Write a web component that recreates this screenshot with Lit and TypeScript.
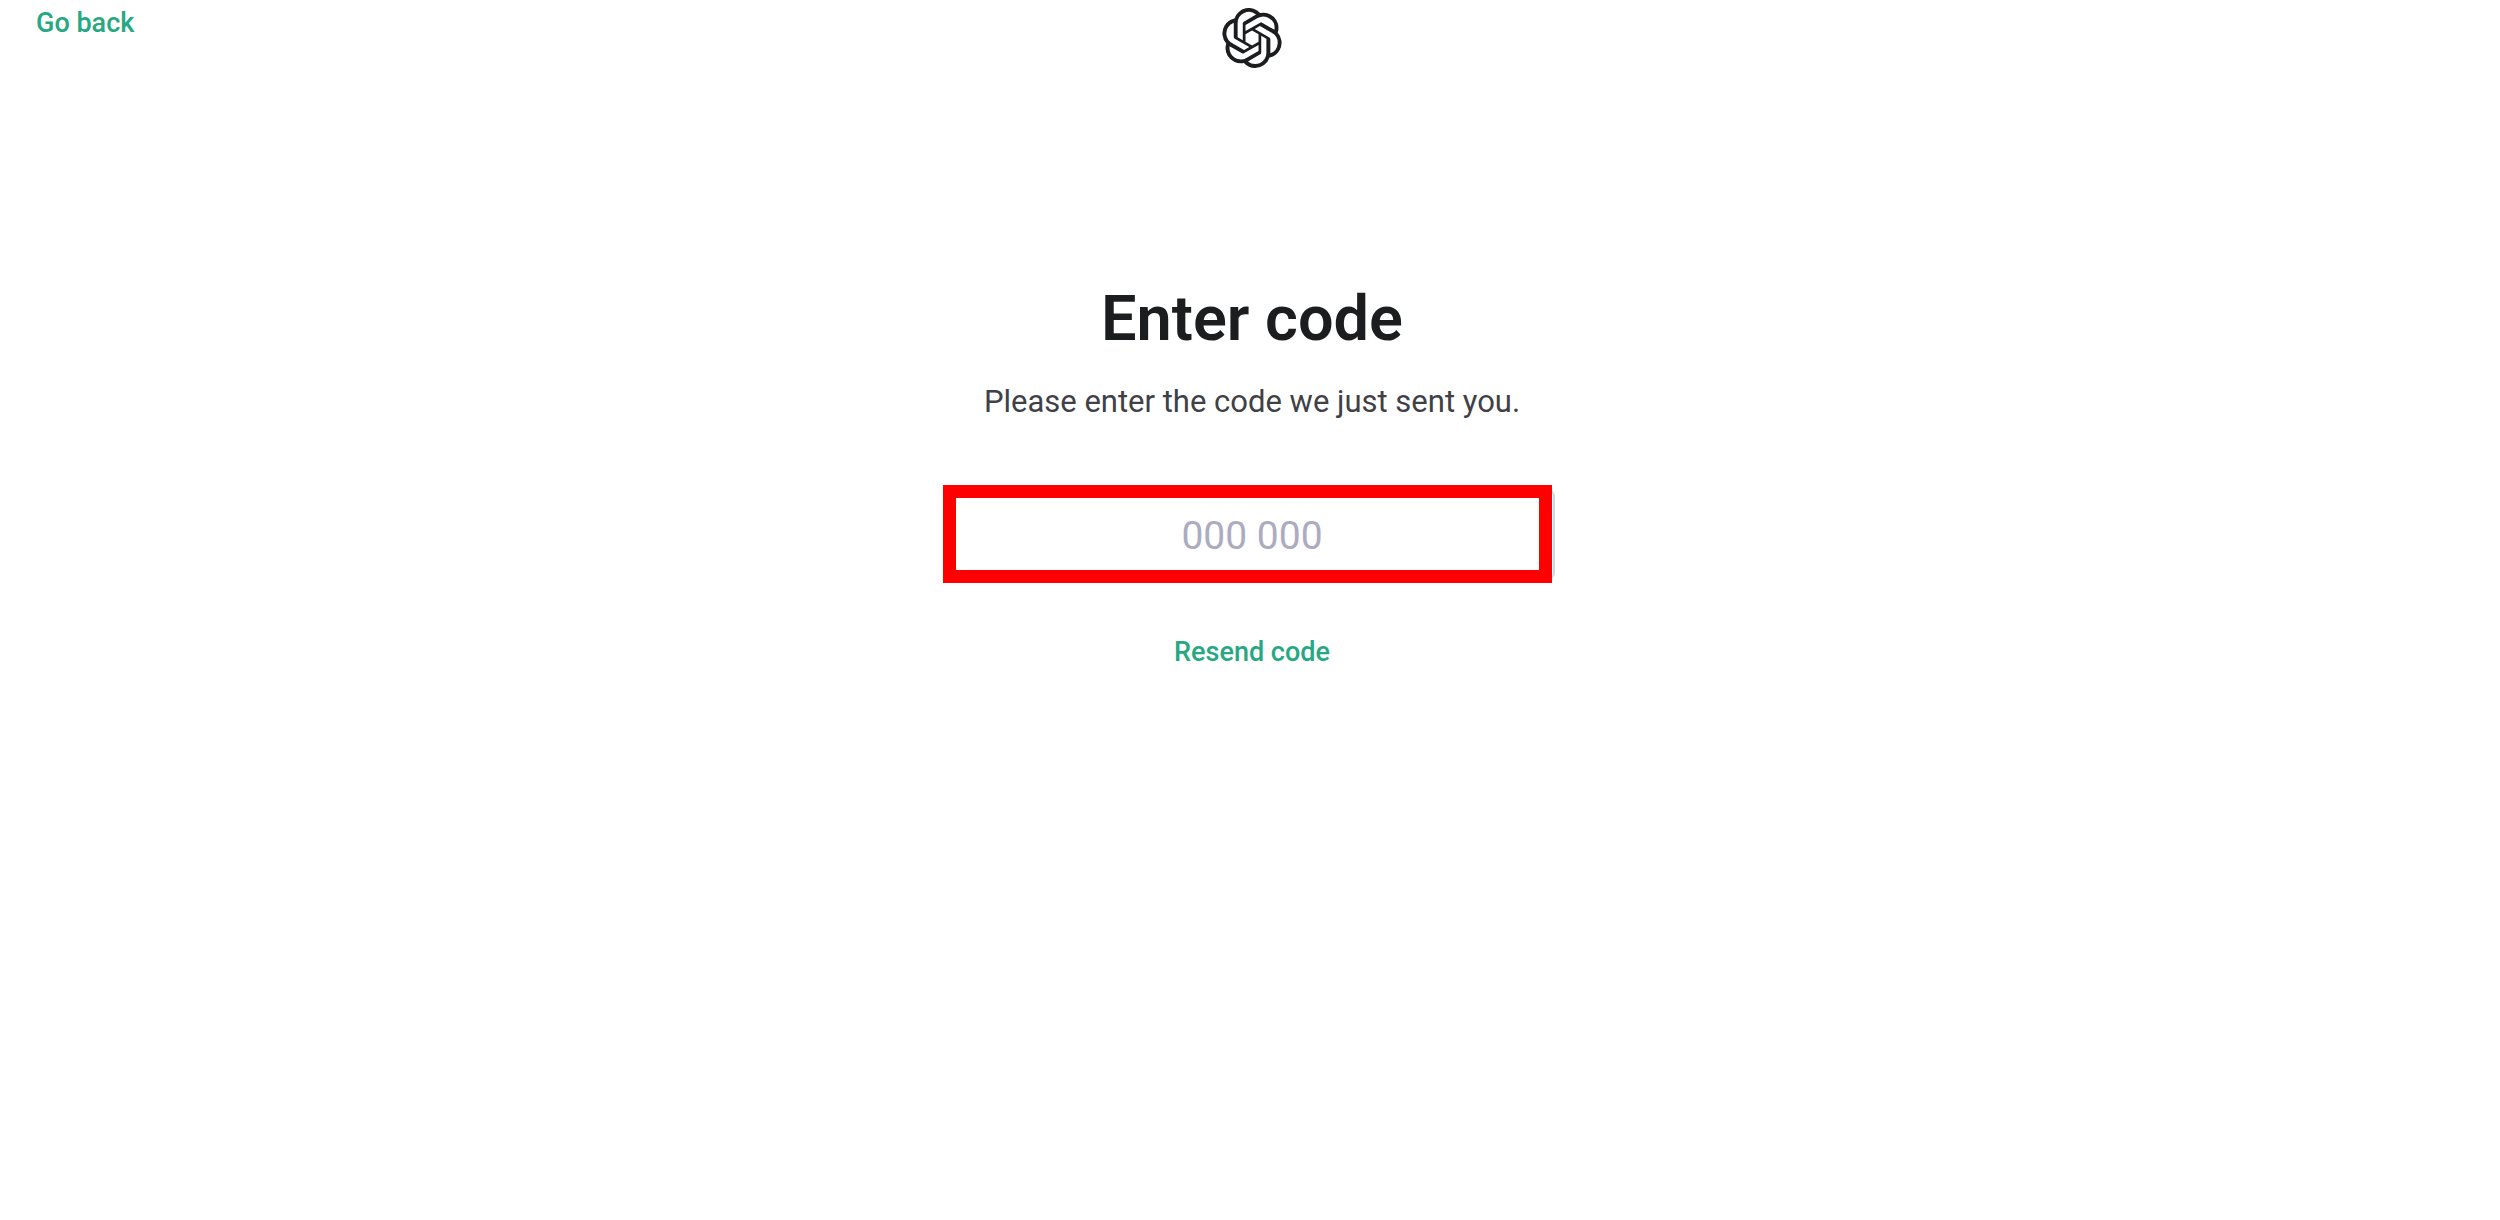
import { LitElement, html, css } from "lit";
import { customElement, state } from "lit/decorators.js";

@customElement("app-root")
export class AppRoot extends LitElement {
  static styles = css`
    :host {
      display: block;
      min-height: 100vh;
      background: #ffffff;
      font-family: Roboto, "Liberation Sans", sans-serif;
      color: #202123;
    }
    .page {
      display: flex;
      flex-direction: column;
      padding-left: 4px;
    }
    .top {
      display: grid;
      grid-template-columns: 1fr auto 1fr;
      align-items: start;
      padding: 8px 32px 0;
    }
    .link {
      justify-self: start;
      font-size: 27px;
      line-height: 30px;
      font-weight: 500;
      color: #27a882;
      text-decoration: none;
      background: none;
      border: 0;
      padding: 0;
      font-family: inherit;
      cursor: pointer;
    }
    .logo {
      display: block;
      width: 60px;
      height: 60px;
      fill: #1c1d1f;
    }
    .content {
      display: flex;
      flex-direction: column;
      align-items: center;
      padding-top: 213px;
    }
    .title {
      margin: 0;
      font-size: 63px;
      line-height: 76px;
      font-weight: 600;
      color: #1c1d1f;
    }
    .hint {
      margin: 25px 0 0;
      font-size: 31px;
      line-height: 40px;
      color: #3f4147;
    }
    .field {
      position: relative;
      box-sizing: border-box;
      width: 100%;
      max-width: 606px;
      margin: 68px 0 58px;
    }
    .code {
      display: block;
      box-sizing: border-box;
      width: 100%;
      height: 89px;
      padding: 2px 16px 0;
      border: 2px solid #d5d5e0;
      border-radius: 6px;
      background: #ffffff;
      font-family: inherit;
      font-size: 39px;
      text-align: center;
      color: #202123;
      outline: none;
    }
    .code::placeholder {
      color: #acabbf;
      opacity: 1;
    }
    .highlight {
      position: absolute;
      inset: -5px 3px -4px -6px;
      border: 13px solid #ff0000;
      pointer-events: none;
    }
  `;

  @state() private code = "";

  private onInput(e: Event) {
    this.code = (e.target as HTMLInputElement).value;
  }

  render() {
    return html`
      <div class="page">
        <header class="top">
          <a class="link" href="#">Go back</a>
          <svg class="logo" viewBox="0 0 24 24" aria-hidden="true">
            <path
              d="M22.2819 9.8211a5.9847 5.9847 0 0 0-.5157-4.9108 6.0462 6.0462 0 0 0-6.5098-2.9A6.0651 6.0651 0 0 0 4.9807 4.1818a5.9847 5.9847 0 0 0-3.9977 2.9 6.0462 6.0462 0 0 0 .7427 7.0966 5.98 5.98 0 0 0 .511 4.9107 6.051 6.051 0 0 0 6.5146 2.9001A5.9847 5.9847 0 0 0 13.2599 24a6.0557 6.0557 0 0 0 5.7718-4.2058 5.9894 5.9894 0 0 0 3.9977-2.9001 6.0557 6.0557 0 0 0-.7475-7.0729zm-9.022 12.6081a4.4755 4.4755 0 0 1-2.8764-1.0408l.1419-.0804 4.7783-2.7582a.7948.7948 0 0 0 .3927-.6813v-6.7369l2.02 1.1686a.071.071 0 0 1 .038.052v5.5826a4.504 4.504 0 0 1-4.4945 4.4944zm-9.6607-4.1254a4.4708 4.4708 0 0 1-.5346-3.0137l.142.0852 4.783 2.7582a.7712.7712 0 0 0 .7806 0l5.8428-3.3685v2.3324a.0804.0804 0 0 1-.0332.0615L9.74 19.9502a4.4992 4.4992 0 0 1-6.1408-1.6464zM2.3408 7.8956a4.485 4.485 0 0 1 2.3655-1.9728V11.6a.7664.7664 0 0 0 .3879.6765l5.8144 3.3543-2.0201 1.1685a.0757.0757 0 0 1-.071 0l-4.8303-2.7865A4.504 4.504 0 0 1 2.3408 7.872zm16.5963 3.8558L13.1038 8.364 15.1192 7.2a.0757.0757 0 0 1 .071 0l4.8303 2.7913a4.4944 4.4944 0 0 1-.6765 8.1042v-5.6772a.79.79 0 0 0-.407-.667zm2.0107-3.0231l-.142-.0852-4.7735-2.7818a.7759.7759 0 0 0-.7854 0L9.409 9.2297V6.8974a.0662.0662 0 0 1 .0284-.0615l4.8303-2.7866a4.4992 4.4992 0 0 1 6.6802 4.66zM8.3065 12.863l-2.02-1.1638a.0804.0804 0 0 1-.038-.0567V6.0742a4.4992 4.4992 0 0 1 7.3757-3.4537l-.142.0805L8.704 5.459a.7948.7948 0 0 0-.3927.6813zm1.0976-2.3654l2.602-1.4998 2.6069 1.4998v2.9994l-2.5974 1.4997-2.6067-1.4997Z"
            />
          </svg>
        </header>
        <main class="content">
          <h1 class="title">Enter code</h1>
          <p class="hint" id="hint">Please enter the code we just sent you.</p>
          <div class="field">
            <input
              class="code"
              type="text"
              inputmode="numeric"
              autocomplete="one-time-code"
              placeholder="000 000"
              aria-labelledby="hint"
              .value=${this.code}
              @input=${this.onInput}
            />
            <div class="highlight"></div>
          </div>
          <button class="link" type="button">Resend code</button>
        </main>
      </div>
    `;
  }
}
